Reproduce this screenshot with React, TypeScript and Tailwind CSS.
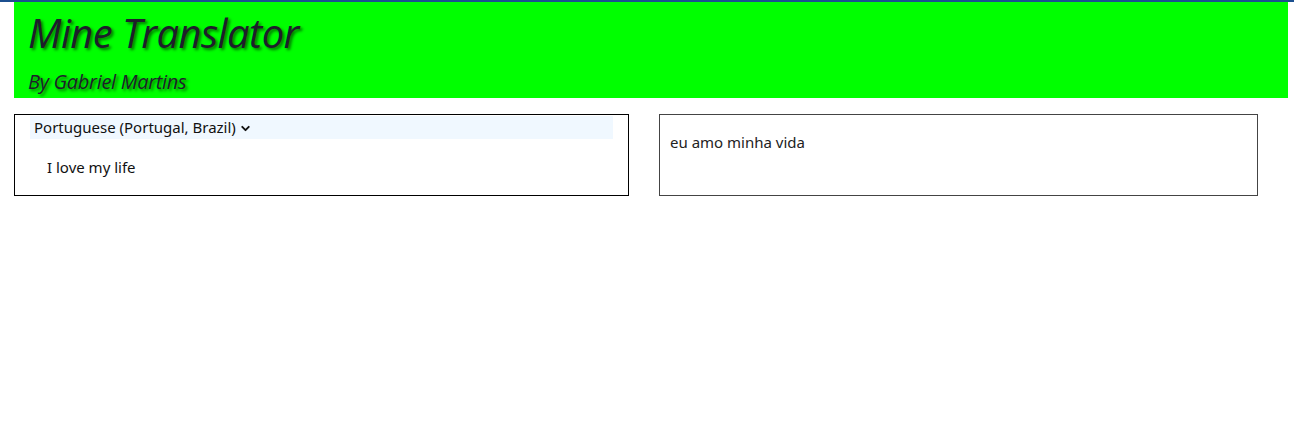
import React from 'react';
import { ChevronDown } from 'lucide-react';

const App: React.FC = () => {
  return (
    <div className="min-h-[439px] bg-white font-['Noto_Sans',sans-serif] text-[#111]">
      <div className="h-[2px] bg-[#1c4f8f]" />

      <header className="ml-[14px] mr-[6px] h-[96px] bg-[#00ff00] pl-[14px] italic font-['Open_Sans',sans-serif] text-[#1e1e2a] [text-shadow:2px_2px_3px_rgba(0,0,0,0.55)]">
        <h1 className="pt-[4px] text-[40px] leading-[54px] tracking-[-0.6px]">Mine Translator</h1>
        <h3 className="mt-[9px] text-[20px] leading-[26px] tracking-[-0.3px]">By Gabriel Martins</h3>
      </header>

      <main className="mt-[16px] flex gap-[30px] pl-[14px]">
        <section className="h-[82px] w-[615px] border border-black">
          <div className="mx-[15px] mt-px flex h-[23px] items-center bg-[#f0f8ff] pl-[4px] text-[15px]">
            <span>Portuguese (Portugal, Brazil)</span>
            <ChevronDown size={13} strokeWidth={3.5} className="ml-[3px] mt-px" />
          </div>
          <p className="mt-[18px] pl-[32px] text-[15px] leading-[20px]">I love my life</p>
        </section>

        <section className="h-[82px] w-[599px] border border-[#444] px-[10px] pt-[17px]">
          <p className="text-[15px] leading-[20px] text-[#222]">eu amo minha vida</p>
        </section>
      </main>
    </div>
  );
};

export default App;
